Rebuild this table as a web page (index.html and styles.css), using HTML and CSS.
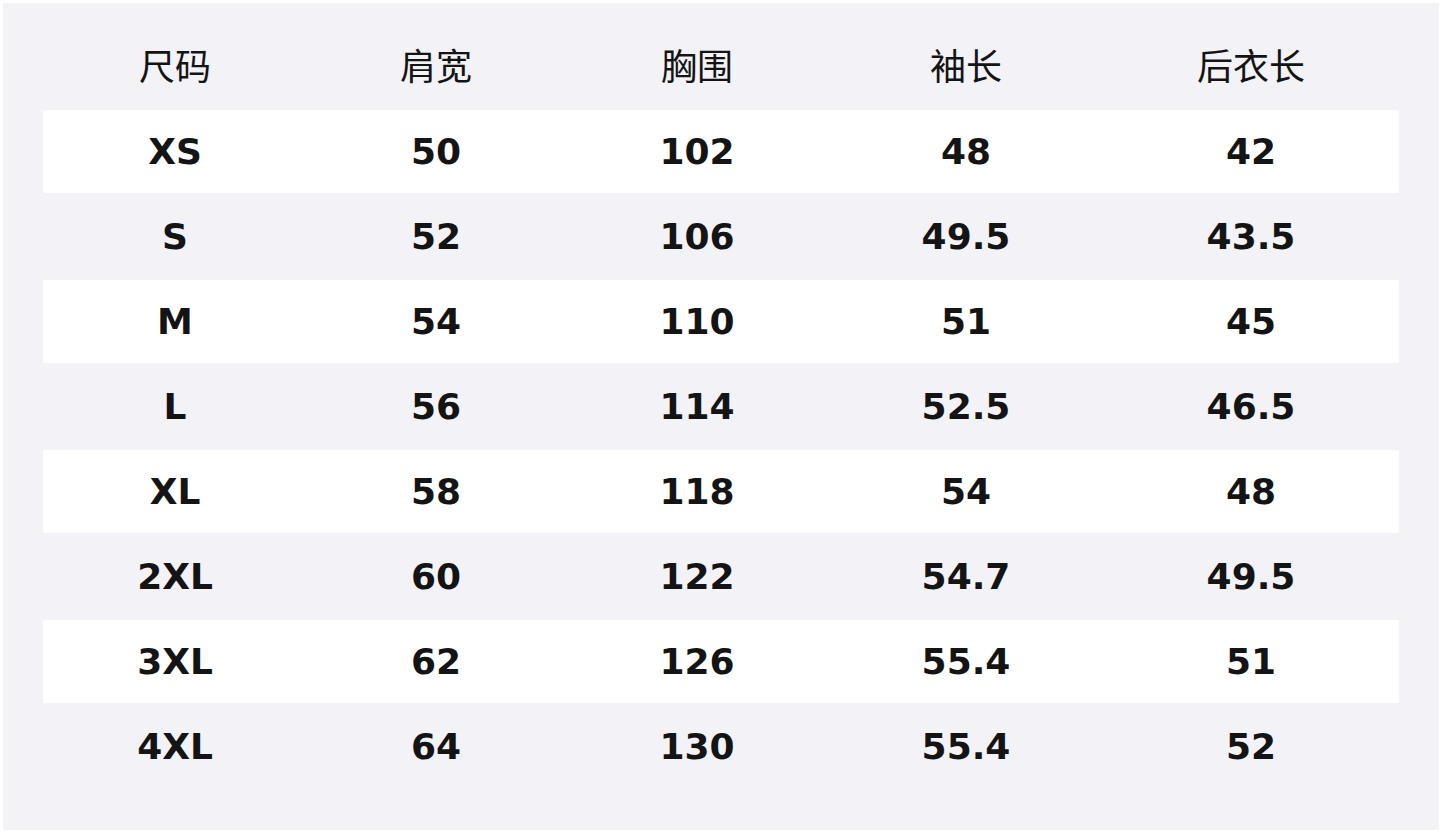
FILE: index.html
```html
<!DOCTYPE html>
<html lang="zh">
<head>
<meta charset="utf-8">
<link rel="stylesheet" href="styles.css">
</head>
<body>
<div class="panel">
  <div class="row head"><div>尺码</div><div>肩宽</div><div>胸围</div><div>袖长</div><div>后衣长</div></div>
  <div class="row alt"><div>XS</div><div>50</div><div>102</div><div>48</div><div>42</div></div>
  <div class="row"><div>S</div><div>52</div><div>106</div><div>49.5</div><div>43.5</div></div>
  <div class="row alt"><div>M</div><div>54</div><div>110</div><div>51</div><div>45</div></div>
  <div class="row"><div>L</div><div>56</div><div>114</div><div>52.5</div><div>46.5</div></div>
  <div class="row alt"><div>XL</div><div>58</div><div>118</div><div>54</div><div>48</div></div>
  <div class="row"><div>2XL</div><div>60</div><div>122</div><div>54.7</div><div>49.5</div></div>
  <div class="row alt"><div>3XL</div><div>62</div><div>126</div><div>55.4</div><div>51</div></div>
  <div class="row"><div>4XL</div><div>64</div><div>130</div><div>55.4</div><div>52</div></div>
</div>
</body>
</html>
```
FILE: styles.css
```css
html, body { margin: 0; padding: 0; background: #ffffff; }
body { padding: 3px; }
.panel {
  height: 827px;
  box-sizing: border-box;
  background: #f2f2f7;
  padding: 22px 40px 42px;
  display: flex;
  flex-direction: column;
  gap: 2px;
}
.row {
  display: grid;
  grid-template-columns: 264px 258px 264px 274px 296px;
  height: 83px;
  align-items: center;
  justify-items: center;
  font-family: "DejaVu Sans", "Noto Sans CJK SC", sans-serif;
  font-weight: bold;
  font-size: 36px;
  color: #141414;
  border-radius: 2px;
}
.row.alt { background: #ffffff; }
.row.head {
  font-family: "Noto Sans CJK SC", sans-serif;
  font-weight: normal;
  font-size: 36px;
  color: #141414;
  padding-bottom: 6px;
  box-sizing: border-box;
}
```
